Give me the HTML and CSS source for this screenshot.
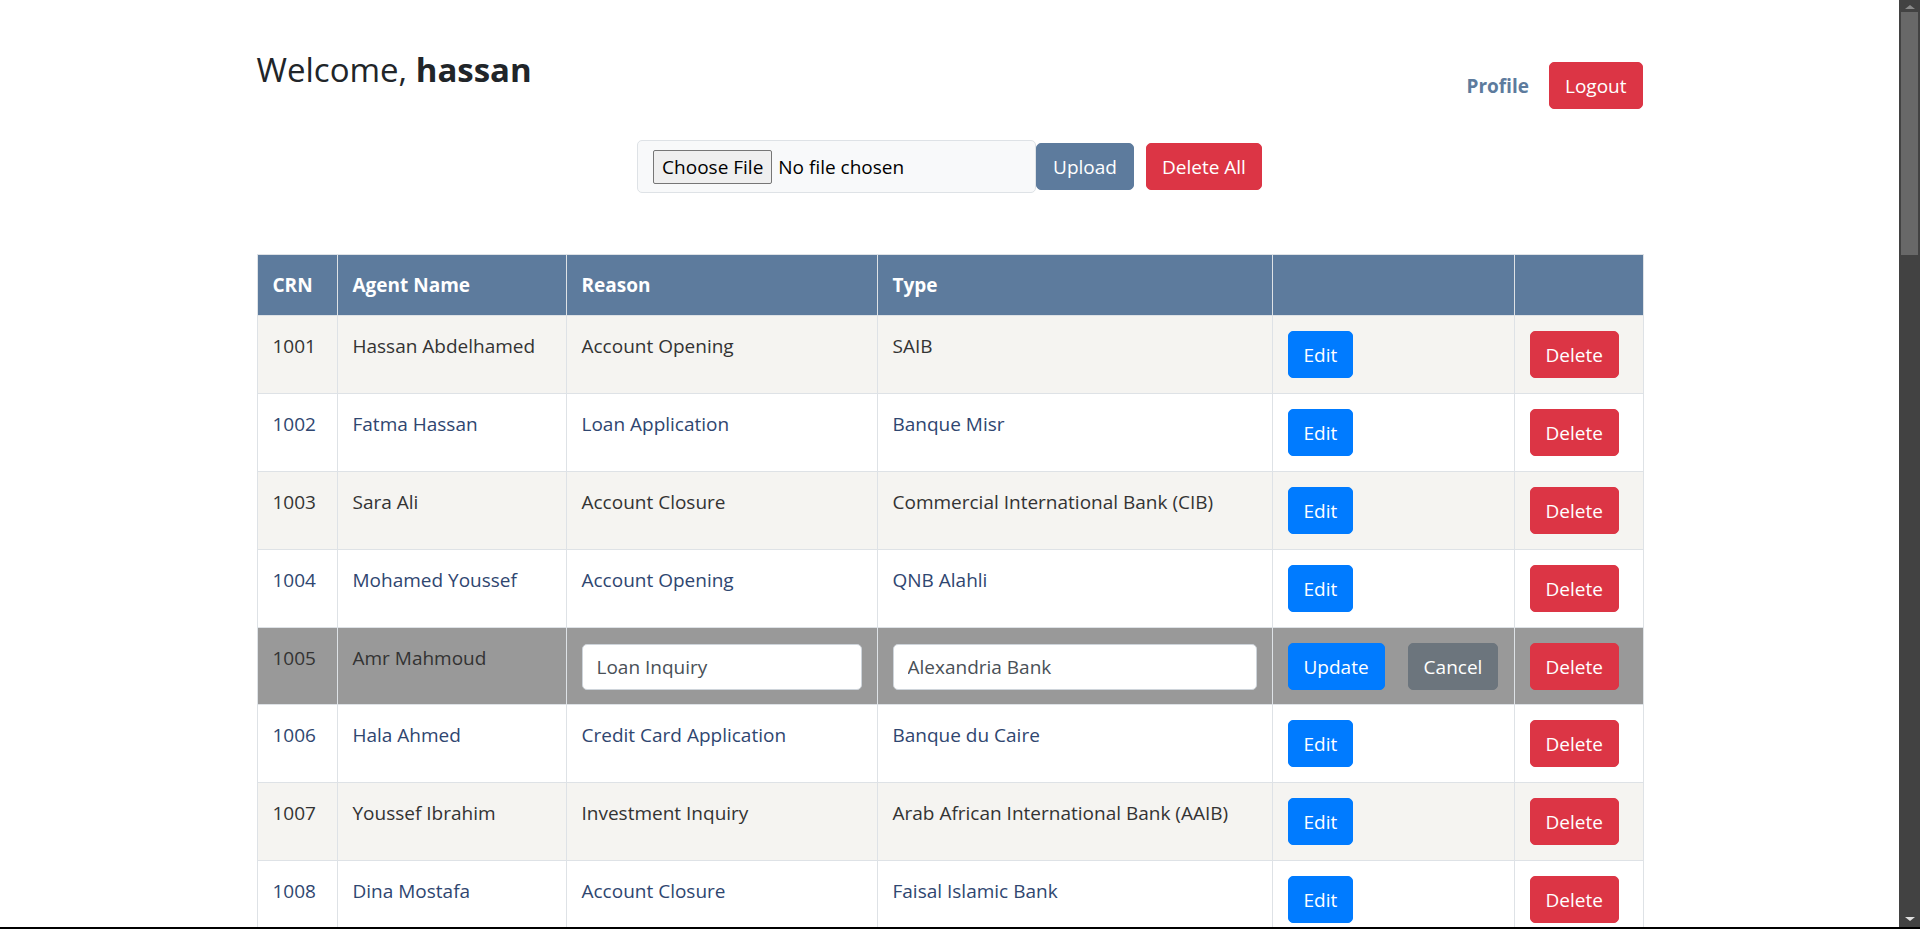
FILE: index.html
```html
<!DOCTYPE html>
<html lang="en">
<head>
<meta charset="utf-8">
<title>Dashboard</title>
<link rel="stylesheet" href="styles.css">
</head>
<body>
<div class="page">
  <main class="container">
    <header class="topbar">
      <h3 class="welcome">Welcome, <strong>hassan</strong></h3>
      <nav class="user-nav">
        <a class="nav-link" href="#">Profile</a>
        <button class="btn btn-danger" type="button">Logout</button>
      </nav>
    </header>

    <form class="upload-form">
      <div class="file-field">
        <span class="file-btn">Choose File</span>
        <span class="file-name">No file chosen</span>
      </div>
      <button class="btn btn-upload" type="button">Upload</button>
      <button class="btn btn-danger btn-delete-all" type="button">Delete All</button>
    </form>

    <table class="records">
      <colgroup>
        <col class="c-crn"><col class="c-agent"><col class="c-reason"><col class="c-type"><col class="c-edit"><col class="c-del">
      </colgroup>
      <thead>
        <tr><th>CRN</th><th>Agent Name</th><th>Reason</th><th>Type</th><th></th><th></th></tr>
      </thead>
      <tbody>
        <tr class="odd"><td>1001</td><td>Hassan Abdelhamed</td><td>Account Opening</td><td>SAIB</td><td><button class="btn btn-primary" type="button">Edit</button></td><td><button class="btn btn-danger" type="button">Delete</button></td></tr>
        <tr class="even"><td>1002</td><td>Fatma Hassan</td><td>Loan Application</td><td>Banque Misr</td><td><button class="btn btn-primary" type="button">Edit</button></td><td><button class="btn btn-danger" type="button">Delete</button></td></tr>
        <tr class="odd"><td>1003</td><td>Sara Ali</td><td>Account Closure</td><td>Commercial International Bank (CIB)</td><td><button class="btn btn-primary" type="button">Edit</button></td><td><button class="btn btn-danger" type="button">Delete</button></td></tr>
        <tr class="even"><td>1004</td><td>Mohamed Youssef</td><td>Account Opening</td><td>QNB Alahli</td><td><button class="btn btn-primary" type="button">Edit</button></td><td><button class="btn btn-danger" type="button">Delete</button></td></tr>
        <tr class="editing"><td>1005</td><td>Amr Mahmoud</td><td><input class="cell-input" type="text" value="Loan Inquiry"></td><td><input class="cell-input" type="text" value="Alexandria Bank"></td><td><button class="btn btn-primary" type="button">Update</button><button class="btn btn-secondary btn-cancel" type="button">Cancel</button></td><td><button class="btn btn-danger" type="button">Delete</button></td></tr>
        <tr class="even"><td>1006</td><td>Hala Ahmed</td><td>Credit Card Application</td><td>Banque du Caire</td><td><button class="btn btn-primary" type="button">Edit</button></td><td><button class="btn btn-danger" type="button">Delete</button></td></tr>
        <tr class="odd"><td>1007</td><td>Youssef Ibrahim</td><td>Investment Inquiry</td><td>Arab African International Bank (AAIB)</td><td><button class="btn btn-primary" type="button">Edit</button></td><td><button class="btn btn-danger" type="button">Delete</button></td></tr>
        <tr class="even"><td>1008</td><td>Dina Mostafa</td><td>Account Closure</td><td>Faisal Islamic Bank</td><td><button class="btn btn-primary" type="button">Edit</button></td><td><button class="btn btn-danger" type="button">Delete</button></td></tr>
      </tbody>
    </table>
  </main>
</div>

<div class="scrollbar" aria-hidden="true">
  <span class="sb-arrow sb-up"></span>
  <span class="sb-thumb"></span>
  <span class="sb-arrow sb-down"></span>
</div>
<div class="window-edge" aria-hidden="true"></div>
</body>
</html>
```

FILE: styles.css
```css
html, body {
  margin: 0;
  padding: 0;
  height: 100%;
  overflow: hidden;
  background: #ffffff;
}

body {
  font-family: "Open Sans", "Noto Sans", sans-serif;
  font-size: 20px;
  line-height: 30px;
  color: #212529;
}

.page {
  width: calc(100% - 21px);
  height: 100%;
}

.container {
  width: 1386px;
  margin: 0 auto;
  padding-top: 49px;
}

/* ---------- top bar ---------- */
.topbar {
  display: flex;
  justify-content: space-between;
  align-items: flex-start;
}

.welcome {
  margin: 0;
  font-size: 33px;
  line-height: 42px;
  font-weight: 500;
  color: #212529;
}

.welcome strong {
  font-weight: 700;
}

.user-nav {
  display: flex;
  align-items: center;
  gap: 20px;
  margin-top: 13px;
}

.nav-link {
  color: #5d7b9d;
  font-weight: 700;
  font-size: 19px;
  text-decoration: none;
}

/* ---------- buttons ---------- */
.btn {
  display: inline-block;
  vertical-align: top;
  font-family: inherit;
  font-size: 19px;
  line-height: 30px;
  padding: 7.5px 15px;
  border: 1px solid transparent;
  border-radius: 5px;
  color: #ffffff;
  cursor: pointer;
}

.btn-primary { background: #007bff; border-color: #007bff; }
.btn-danger { background: #dc3545; border-color: #dc3545; }
.btn-secondary { background: #6c757d; border-color: #6c757d; }
.btn-upload { background: #5d7b9d; border-color: #5d7b9d; }

/* ---------- upload form ---------- */
.upload-form {
  display: flex;
  justify-content: center;
  align-items: center;
  margin-top: 31px;
}

.file-field {
  box-sizing: border-box;
  width: 399px;
  height: 53px;
  display: flex;
  align-items: center;
  padding-left: 15px;
  background: #f8f9fa;
  border: 1px solid #dee2e6;
  border-radius: 5px;
}

.file-btn {
  box-sizing: border-box;
  height: 34px;
  display: inline-flex;
  align-items: center;
  padding: 0 8px;
  background: #efefef;
  border: 1px solid #767676;
  border-radius: 2px;
  color: #000000;
  font-size: 19px;
}

.file-name {
  margin-left: 6px;
  color: #000000;
  font-size: 19px;
}

.btn-upload {
  padding-left: 16px;
  padding-right: 16px;
}

.btn-delete-all {
  margin-left: 12px;
}

/* ---------- table ---------- */
.records {
  width: 1386px;
  margin-top: 61px;
  border-collapse: collapse;
  table-layout: fixed;
  font-size: 19px;
}

.c-crn { width: 80px; }
.c-agent { width: 229px; }
.c-reason { width: 311px; }
.c-type { width: 395px; }
.c-edit { width: 242px; }
.c-del { width: 129px; }

.records th,
.records td {
  border: 1px solid #dee2e6;
  padding: 15px;
  text-align: left;
  vertical-align: top;
  white-space: nowrap;
}

.records th {
  background: #5d7b9d;
  color: #ffffff;
  font-weight: 700;
}

.records tr.odd td { background: #f5f4f1; color: #333333; }
.records tr.even td { background: #ffffff; color: #2f4670; }
.records tr.editing td { background: #999999; color: #333333; }

.records tr.editing td {
  padding-top: 15px;
  padding-bottom: 14px;
}

.cell-input {
  box-sizing: border-box;
  display: block;
  width: 100%;
  height: 46px;
  margin-top: 1px;
  padding: 7px 14px;
  font-family: inherit;
  font-size: 19px;
  color: #495057;
  background: #ffffff;
  border: 1px solid #ced4da;
  border-radius: 5px;
}

.btn-cancel {
  margin-left: 23px;
}

/* ---------- fake window scrollbar ---------- */
.scrollbar {
  position: fixed;
  top: 0;
  right: 0;
  width: 21px;
  height: 100%;
  background: #424242;
}

.sb-thumb {
  position: absolute;
  left: 2px;
  right: 2px;
  top: 12px;
  height: 243px;
  background: #686868;
}

.sb-arrow {
  position: absolute;
  left: 6px;
  width: 0;
  height: 0;
  border-left: 5px solid transparent;
  border-right: 5px solid transparent;
}

.sb-up {
  top: 5px;
  border-bottom: 4px solid #8a8a8a;
}

.sb-down {
  bottom: 8px;
  border-top: 4px solid #e0e0e0;
}

.window-edge {
  position: fixed;
  left: 0;
  right: 0;
  bottom: 0;
  height: 2px;
  background: #000000;
}
```
